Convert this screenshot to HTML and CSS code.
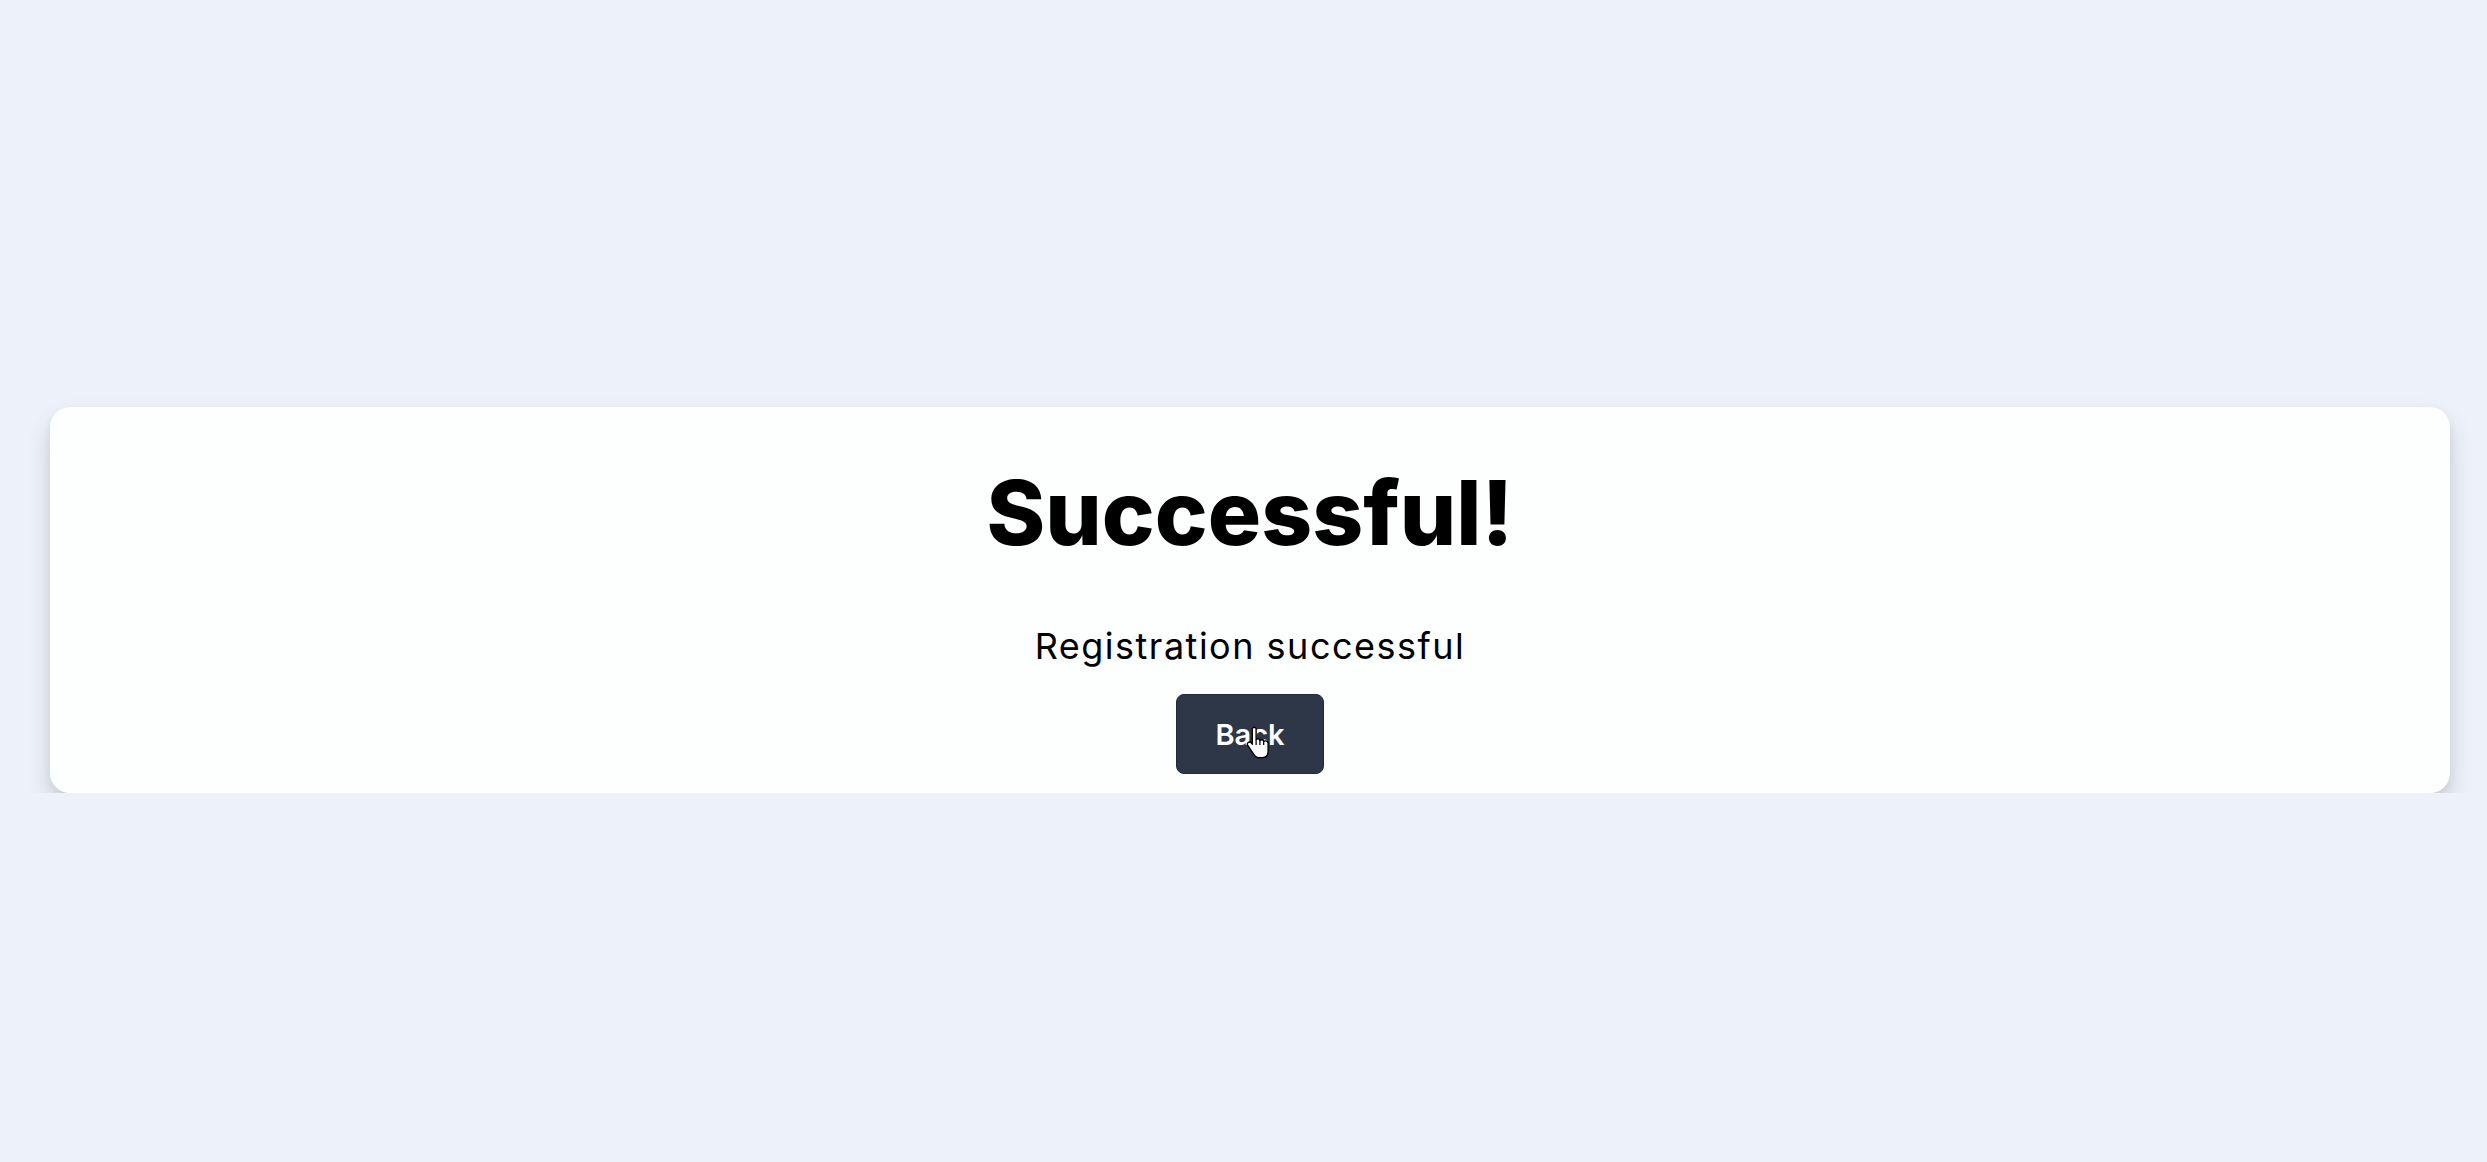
FILE: index.html
```html
<!DOCTYPE html>
<html lang="en">
<head>
    <meta charset="UTF-8">
    <meta name="viewport" content="width=device-width, initial-scale=1.0">
    <title>Successful</title>
    <link rel="stylesheet" href="styles.css">
</head>
<body>

    <div class="page">
        <div class="result-card">
            <h1 class="result-title">Successful!</h1>
            <p class="result-message">Registration successful</p>
            <button class="back-button" onclick="window.location.href='login.html'">
                Back
                <!-- pointer sitting over the button -->
                <svg class="pointer" width="24" height="33" viewBox="0 0 19 26">
                    <path d="M6.5 1 C7.4 1 8 1.7 8 2.5 L8 10.5 C8.4 10.1 8.9 10 9.5 10 C10.3 10 11 10.6 11 11.4 C11.4 11 11.9 10.8 12.5 10.8 C13.3 10.8 14 11.4 14 12.2 C14.4 11.9 14.9 11.7 15.5 11.7 C16.6 11.7 17.5 12.5 17.5 13.6 L17.5 20 C17.5 23 15.8 25 13 25 L9.5 25 C7.5 25 6.5 23 5.5 21.5 L1.5 15.5 C0.9 14.7 1 13.6 1.7 13 C2.4 12.4 3.5 12.5 4.1 13.2 L5 14.3 L5 2.5 C5 1.7 5.6 1 6.5 1 Z" fill="#ffffff" stroke="#000000" stroke-width="1.1" stroke-linejoin="round"/>
                    <path d="M8 10.5 L8 15 M11 11.4 L11 15 M14 12.2 L14 15" stroke="#000000" stroke-width="1" fill="none"/>
                </svg>
            </button>
        </div>
    </div>

</body>
</html>
```

FILE: styles.css
```css
body {
    margin: 0;
    background-color: #edf1f9;
    font-family: "Inter", "Noto Sans", sans-serif;
    color: #000;
}

.page {
    padding-top: 407px;
    padding-left: 50px;
}

.result-card {
    width: 2400px;
    height: 386px;
    box-sizing: border-box;
    background-color: #fdfefe;
    border-radius: 20px;
    box-shadow: 0 14px 26px rgba(0, 0, 0, 0.14), 0 4px 10px rgba(0, 0, 0, 0.06);
    display: flex;
    flex-direction: column;
    align-items: center;
    padding-top: 61px;
}

.result-title {
    margin: 0;
    font-size: 89px;
    font-weight: 800;
    line-height: 1;
}

.result-message {
    margin: 71px 0 0 0;
    font-size: 36px;
    font-weight: 400;
    line-height: 1;
    letter-spacing: 1.5px;
}

.back-button {
    position: relative;
    margin-top: 30px;
    width: 148px;
    height: 80px;
    background-color: #2d3748;
    color: #ffffff;
    border: 1px solid #232b38;
    border-radius: 8px;
    font-family: "Inter", "Noto Sans", sans-serif;
    font-size: 29px;
    font-weight: 600;
    cursor: pointer;
}

.pointer {
    position: absolute;
    left: 69px;
    top: 31px;
}
```
